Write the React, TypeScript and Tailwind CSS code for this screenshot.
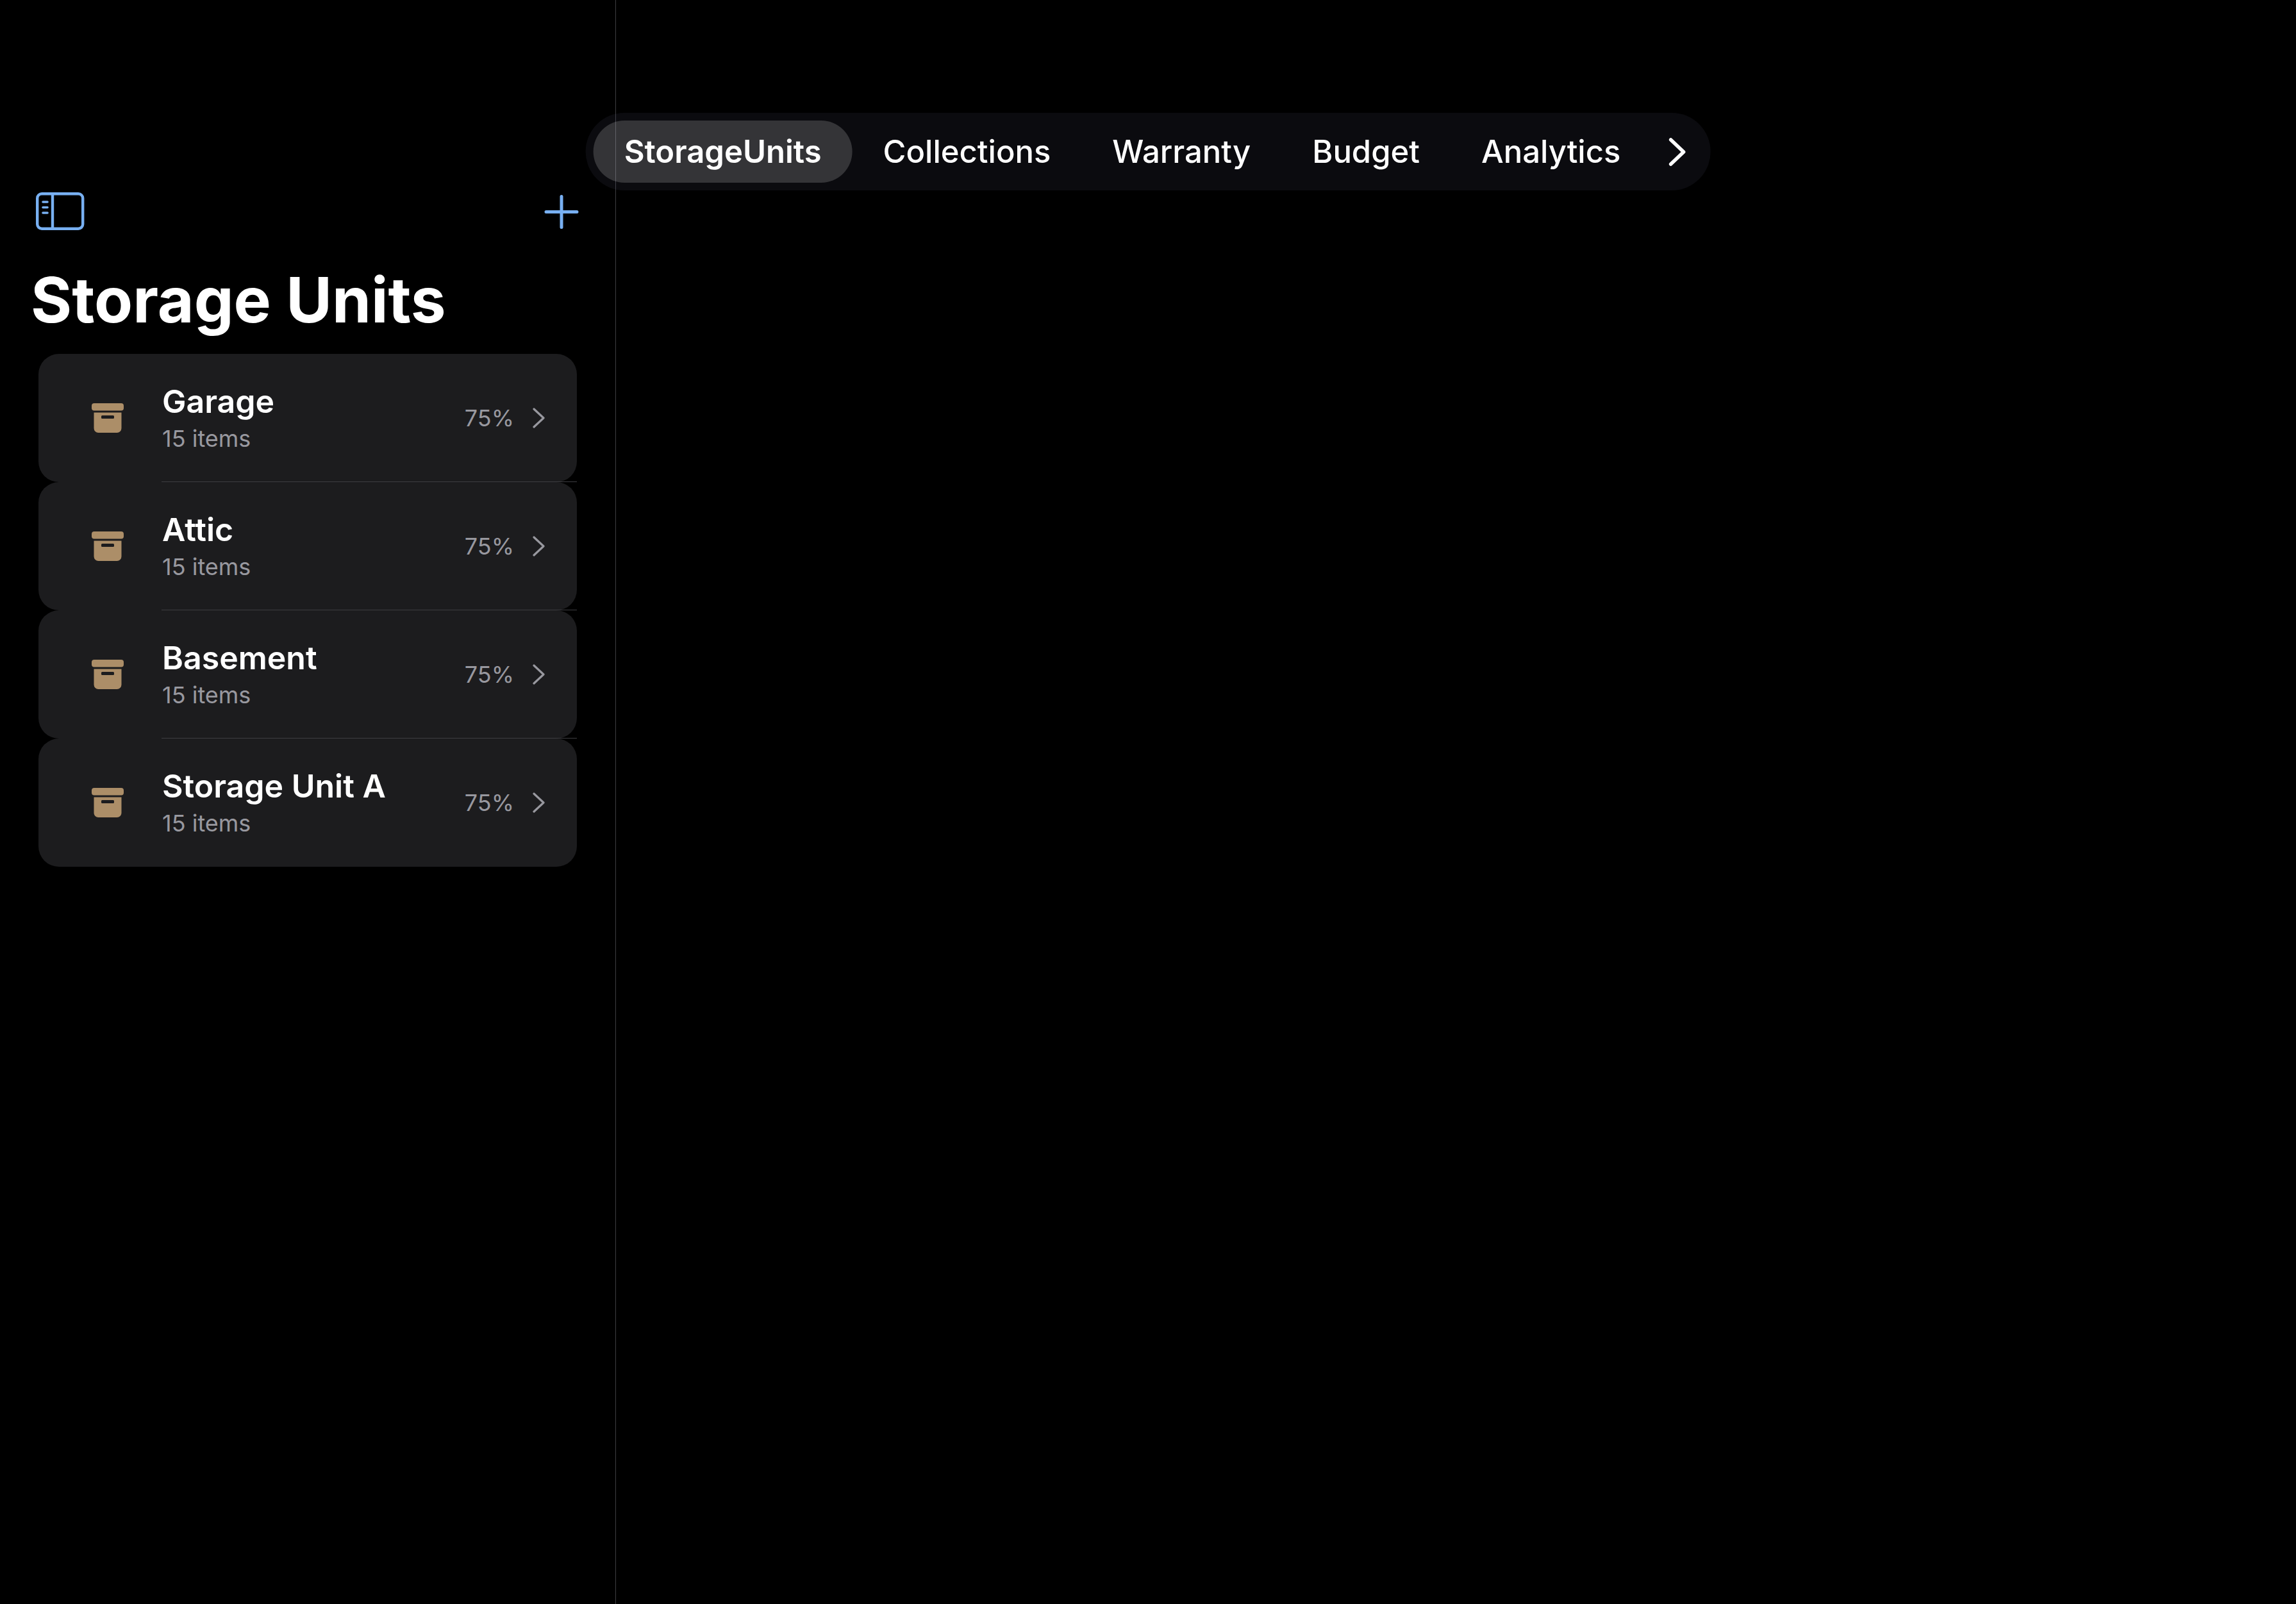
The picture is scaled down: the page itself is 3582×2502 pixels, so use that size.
const tabs = ['StorageUnits', 'Collections', 'Warranty', 'Budget', 'Analytics'];

const units = [
  { name: 'Garage', items: 15, used: '75%' },
  { name: 'Attic', items: 15, used: '75%' },
  { name: 'Basement', items: 15, used: '75%' },
  { name: 'Storage Unit A', items: 15, used: '75%' },
];

function SidebarIcon() {
  return (
    <svg width="76" height="60" viewBox="0 0 76 60" fill="none" stroke="currentColor" strokeWidth="4.4" strokeLinecap="round" aria-hidden="true">
      <rect x="2.2" y="2.2" width="71" height="54.500" rx="7" />
      <path d="M26 3V56" strokeLinecap="butt" />
      <path d="M11 15H18M11 23.5H18M11 32H18" strokeWidth="3.6" />
    </svg>
  );
}

function PlusIcon() {
  return (
    <svg width="54" height="54" viewBox="0 0 54 54" fill="none" stroke="currentColor" strokeWidth="5" strokeLinecap="round" aria-hidden="true">
      <path d="M27 3.5V51.5M3 27.500H51" />
    </svg>
  );
}

function BoxIcon() {
  return (
    <svg width="50" height="46" viewBox="0 0 50 46" className="text-[#ac8e68]" aria-hidden="true">
      <rect width="50" height="11.5" rx="4" fill="currentColor" />
      <path
        fill="currentColor"
        fillRule="evenodd"
        d="M3.5 14.5H46.5V39A7 7 0 0 1 39.5 46H10.5A7 7 0 0 1 3.5 39ZM16.5 19A1.5 1.5 0 0 0 15 20.5V22.5A1.5 1.5 0 0 0 16.5 24H33.5A1.5 1.5 0 0 0 35 22.5V20.5A1.5 1.5 0 0 0 33.5 19Z"
      />
    </svg>
  );
}

export default function App() {
  return (
    <div className="relative flex min-h-screen bg-black font-[Inter,sans-serif] text-white">
      <aside className="w-[961px] shrink-0 border-r border-[#3d3d41] pt-[300px]">
        <div className="flex items-center justify-between pr-[57px] pl-14 text-[#78b0f2]">
          <button type="button" aria-label="Toggle sidebar">
            <SidebarIcon />
          </button>
          <button type="button" aria-label="Add storage unit">
            <PlusIcon />
          </button>
        </div>
        <h1 className="mt-12 pl-12 text-[98px] leading-[120px] font-bold">Storage Units</h1>
        <ul className="mt-6 pr-[60px] pl-[60px]">
          {units.map((unit) => (
            <li key={unit.name} className="group relative">
              <a href="#" className="flex h-[200px] items-center rounded-[32px] bg-[#1c1c1e] pr-[50px] pl-[83px]">
                <BoxIcon />
                <span className="ml-[60px] flex grow flex-col">
                  <span className="text-[50px] leading-[64px] font-semibold">{unit.name}</span>
                  <span className="text-[36px] leading-[52px] text-[#98989f]">{unit.items} items</span>
                </span>
                <span className="text-[36px] text-[#98989f]">{unit.used}</span>
                <svg width="20" height="32" viewBox="0 0 20 32" fill="none" stroke="#98989f" strokeWidth="3.2" strokeLinecap="round" strokeLinejoin="round" className="ml-7" aria-hidden="true">
                  <path d="M3 2L18 16L3 30" />
                </svg>
              </a>
              <span className="absolute right-0 bottom-0 left-[192px] h-px bg-[#3d3d41] group-last:hidden" />
            </li>
          ))}
        </ul>
      </aside>
      <main className="grow" />
      <nav aria-label="Sections" className="absolute top-44 left-1/2 flex -translate-x-1/2 items-center rounded-full bg-[#6e6e96]/10 p-3">
        {tabs.map((tab, i) => (
          <a
            key={tab}
            href="#"
            aria-current={i === 0 ? 'page' : undefined}
            className="rounded-full px-12 text-[49px] leading-[97px] font-medium aria-[current=page]:bg-white/17 aria-[current=page]:font-semibold"
          >
            {tab}
          </a>
        ))}
        <button type="button" aria-label="More sections" className="px-[26px]">
          <svg width="28" height="46" viewBox="0 0 28 46" fill="none" stroke="currentColor" strokeWidth="5.5" strokeLinecap="round" strokeLinejoin="round" aria-hidden="true">
            <path d="M4 4L24 23L4 42" />
          </svg>
        </button>
      </nav>
    </div>
  );
}
